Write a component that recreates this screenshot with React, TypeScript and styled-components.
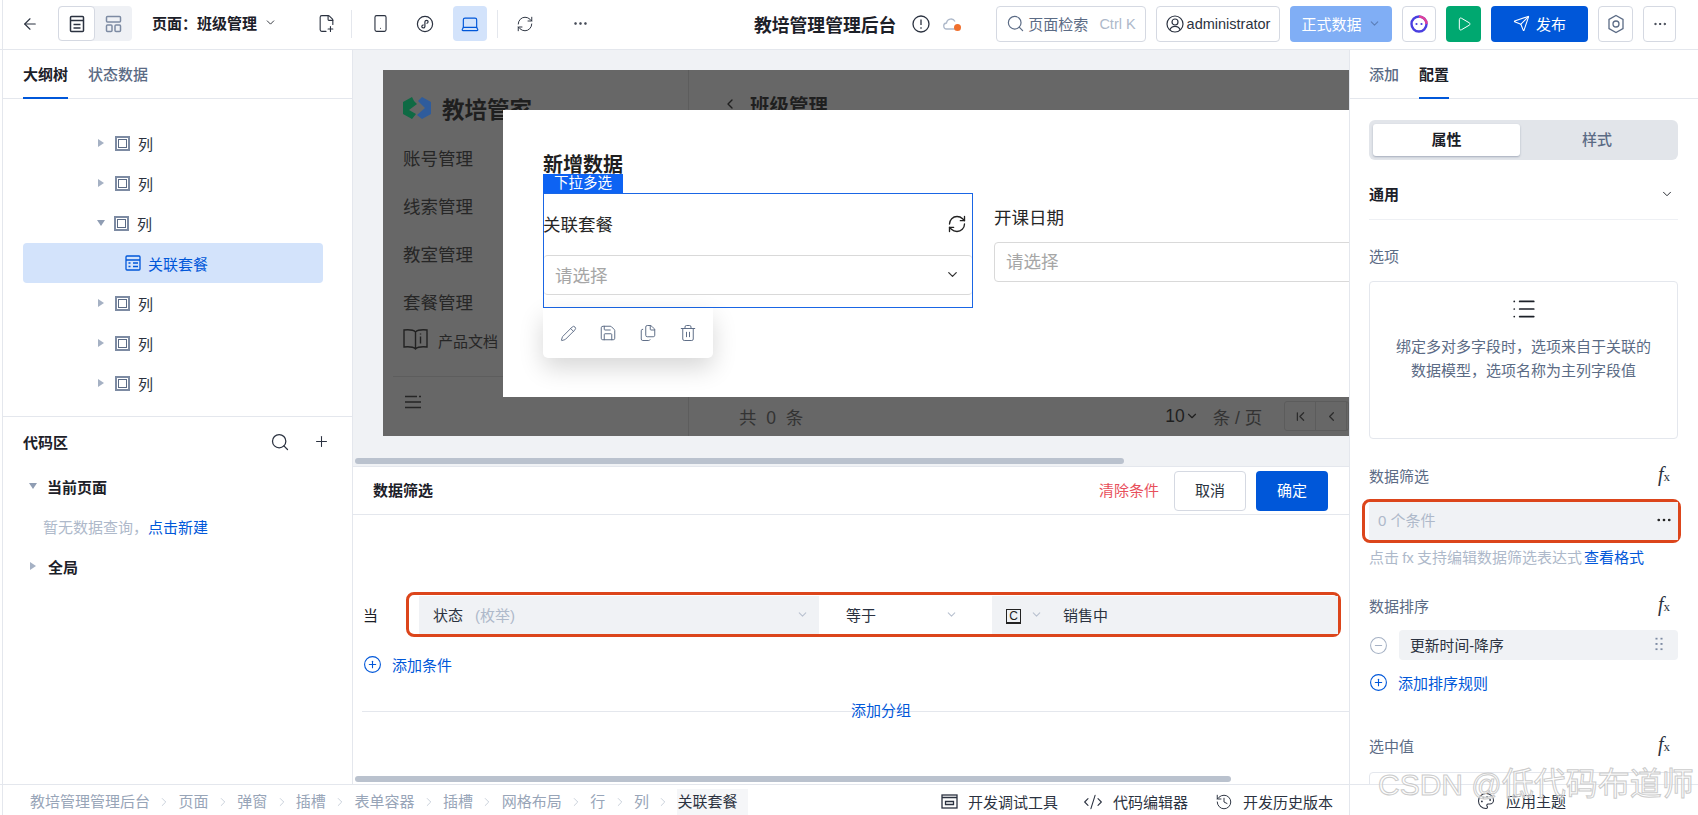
import React from "react";
import styled, { createGlobalStyle } from "styled-components";
import {
  ArrowLeft,
  ChevronDown,
  ChevronFirst,
  ChevronLeft,
  ChevronRight,
  Code2,
  CircleMinus,
  CirclePlus,
  Files,
  FilePlus2,
  History,
  Laptop,
  List,
  MoreHorizontal,
  Palette,
  Pencil,
  Play,
  Plus,
  RefreshCw,
  Save,
  Search,
  Send,
  Smartphone,
  Trash2,
} from "lucide-react";

const BLUE = "#0057d9";
const LINE = "#e4e7ed";
const SLATE = "#5b6b85";
const MUTED = "#aeb9ca";
const RED_MARK = "#dc451b";

const GlobalStyle = createGlobalStyle`
  html, body { margin: 0; padding: 0; background: #fff; }
  body { font-family: "Liberation Sans", "Noto Sans CJK SC", sans-serif; color: #1c2028; }
  * { box-sizing: border-box; }
`;

const Shell = styled.div`
  position: relative;
  width: 1698px;
  height: 815px;
  overflow: hidden;
  display: grid;
  grid-template-rows: 50px 734px 31px;
  background: #fff;
  &::before {
    content: "";
    position: absolute;
    left: 2px;
    top: 0;
    bottom: 0;
    width: 1px;
    background: ${LINE};
  }
`;

/* ---------- top bar ---------- */
const TopBar = styled.header`
  display: flex;
  align-items: center;
  padding: 0 22px 2px 15px;
  border-bottom: 1px solid ${LINE};
`;

const Slot = styled.div<{ $ml?: number; $w?: number; $active?: boolean }>`
  width: ${(p) => p.$w ?? 30}px;
  height: 35px;
  margin-left: ${(p) => p.$ml ?? 0}px;
  display: flex;
  flex: none;
  align-items: center;
  justify-content: center;
  border-radius: 4px;
  color: ${(p) => (p.$active ? BLUE : "#2b3240")};
  background: ${(p) => (p.$active ? "#d3e3fb" : "transparent")};
`;

const ViewToggle = styled.div`
  display: flex;
  width: 74px;
  height: 35px;
  margin-left: 13px;
  flex: none;
  background: #eff1f5;
  border-radius: 4px;
`;

const ViewOption = styled.div<{ $on?: boolean }>`
  width: 37px;
  display: flex;
  align-items: center;
  justify-content: center;
  border-radius: 4px;
  background: ${(p) => (p.$on ? "#fff" : "transparent")};
  border: ${(p) => (p.$on ? `1px solid #d5d9e2` : "none")};
  color: ${(p) => (p.$on ? "#2b3240" : "#7d8ba3")};
`;

const PageSelect = styled.div`
  width: 125px;
  margin-left: 20px;
  padding-bottom: 2px;
  flex: none;
  display: flex;
  align-items: center;
  justify-content: space-between;
  font-size: 15px;
  font-weight: 600;
  white-space: nowrap;
`;

const Sep = styled.i<{ $ml: number }>`
  width: 1px;
  height: 28px;
  margin-left: ${(p) => p.$ml}px;
  flex: none;
  background: ${LINE};
`;

const AppTitle = styled.div`
  margin-left: 159px;
  width: 143px;
  flex: none;
  font-size: 17.8px;
  font-weight: 700;
  white-space: nowrap;
`;

const TopRight = styled.div`
  margin-left: auto;
  display: flex;
  align-items: center;
  gap: 10px;
`;

const Outlined = styled.div<{ $w: number }>`
  width: ${(p) => p.$w}px;
  height: 36px;
  display: flex;
  align-items: center;
  justify-content: center;
  gap: 3px;
  flex: none;
  white-space: nowrap;
  font-size: 14.5px;
  border: 1px solid #d5d9e2;
  border-radius: 4px;
  color: #2b3240;
`;

const SearchHint = styled.span`
  color: ${SLATE};
  font-size: 15px;
`;

const Kbd = styled.span`
  margin-left: 8px;
  color: ${MUTED};
  font-size: 14.5px;
`;

const Filled = styled.div<{ $w: number; $bg: string }>`
  width: ${(p) => p.$w}px;
  height: 36px;
  display: flex;
  align-items: center;
  justify-content: center;
  gap: 6px;
  flex: none;
  color: #fff;
  font-size: 15px;
  border-radius: 4px;
  background: ${(p) => p.$bg};
`;

/* ---------- columns ---------- */
const Columns = styled.div`
  display: grid;
  grid-template-columns: 350px 996px 349px;
  padding-left: 3px;
  min-height: 0;
`;

const LeftPanel = styled.aside`
  display: flex;
  flex-direction: column;
  min-height: 0;
  border-right: 1px solid ${LINE};
`;

const TabBar = styled.div<{ $pl: number }>`
  height: 49px;
  flex: none;
  display: flex;
  gap: 20px;
  padding-left: ${(p) => p.$pl}px;
  border-bottom: 1px solid ${LINE};
`;

const Tab = styled.div<{ $on?: boolean }>`
  height: 49px;
  padding-top: 13px;
  font-size: 15px;
  font-weight: ${(p) => (p.$on ? 600 : 500)};
  color: ${(p) => (p.$on ? "#1c2028" : SLATE)};
  border-bottom: 2px solid ${(p) => (p.$on ? BLUE : "transparent")};
  white-space: nowrap;
`;

const TreeArea = styled.div`
  height: 318px;
  flex: none;
  padding-top: 24px;
  overflow: hidden;
  border-bottom: 1px solid ${LINE};
`;

const TreeRow = styled.div`
  height: 40px;
  display: flex;
  align-items: center;
  padding-left: 95px;
  font-size: 15px;
  color: #2b3240;
`;

const Caret = styled.i<{ $open?: boolean }>`
  flex: none;
  width: 0;
  height: 0;
  ${(p) =>
    p.$open
      ? `border-left: 4px solid transparent; border-right: 4px solid transparent; border-top: 6px solid #8f9db3; margin: 0 -2px 0 -1px;`
      : `border-top: 4px solid transparent; border-bottom: 4px solid transparent; border-left: 6px solid #a5b1c4;`}
`;

const ColumnGlyph = styled.i`
  width: 15px;
  height: 15px;
  margin: 0 8px 0 11px;
  flex: none;
  border: 2px solid #7d8ba3;
  display: flex;
  align-items: center;
  justify-content: center;
  &::after {
    content: "";
    width: 7px;
    height: 7px;
    border: 1px solid #5b6b85;
  }
`;

const SelectedRow = styled.div`
  height: 40px;
  margin: 0 29px 0 20px;
  padding-left: 102px;
  display: flex;
  align-items: center;
  gap: 7px;
  font-size: 15px;
  color: ${BLUE};
  background: #d3e3fb;
  border-radius: 4px;
`;

const CodeArea = styled.div`
  flex: 1;
  padding: 0 20px;
`;

const CodeHeader = styled.div`
  height: 49px;
  display: flex;
  align-items: center;
  font-size: 15px;
  font-weight: 600;
  color: #1c2028;
`;

const CodeTools = styled.div`
  margin-left: auto;
  display: flex;
  align-items: center;
  gap: 23px;
  color: #2b3240;
  padding-right: 2px;
`;

const CodeGroup = styled.div`
  height: 40px;
  display: flex;
  align-items: center;
  padding-left: 7px;
  gap: 12px;
  font-size: 15px;
  font-weight: 600;
`;

const CodeEmpty = styled.div`
  height: 40px;
  display: flex;
  align-items: center;
  padding-left: 20px;
  font-size: 15px;
  color: ${MUTED};
`;

const LinkText = styled.span`
  color: ${BLUE};
`;

/* ---------- canvas ---------- */
const Center = styled.main`
  display: flex;
  flex-direction: column;
  min-width: 0;
  min-height: 0;
`;

const Canvas = styled.div`
  height: 417px;
  flex: none;
  padding: 20px 0 0 30px;
  background: #f0f2f5;
  overflow: hidden;
  border-bottom: 1px solid ${LINE};
`;

const Preview = styled.div`
  position: relative;
  display: flex;
  height: 366px;
  width: 966px;
  background: #676767;
  overflow: hidden;
  color: #1f1f1f;
`;

const PreviewSide = styled.div`
  width: 306px;
  flex: none;
  padding: 26px 0 0 20px;
  border-right: 1px solid #5d5d5d;
`;

const Brand = styled.div`
  height: 24px;
  display: flex;
  align-items: center;
  gap: 11px;
  font-size: 22.5px;
  font-weight: 700;
  white-space: nowrap;
`;

const SideMenu = styled.div`
  margin-top: 13px;
`;

const SideItem = styled.div`
  height: 48px;
  display: flex;
  align-items: center;
  font-size: 17.5px;
  color: #262626;
`;

const DocsRow = styled.div`
  height: 24px;
  margin-top: 3px;
  display: flex;
  align-items: center;
  gap: 10px;
  font-size: 15px;
  color: #262626;
`;

const SideFoot = styled.div`
  height: 61px;
  margin: 24px 0 0 -10px;
  padding: 18px 0 0 11px;
  border-top: 1px solid #5d5d5d;
  color: #262626;
`;

const PreviewMain = styled.div`
  flex: 1;
  display: flex;
  flex-direction: column;
  justify-content: space-between;
  min-width: 0;
`;

const PreviewHead = styled.div`
  height: 24px;
  margin-top: 22px;
  padding-left: 33px;
  display: flex;
  align-items: center;
  gap: 12px;
  font-size: 19.5px;
  font-weight: 700;
`;

const PreviewFoot = styled.div`
  height: 36px;
  display: flex;
  align-items: center;
  padding: 0 0 4px 50px;
  font-size: 17.5px;
  color: #333;
  white-space: nowrap;
`;

const PageSize = styled.span`
  margin-left: 362px;
  display: flex;
  align-items: center;
  color: #1f1f1f;
`;

const PerPage = styled.span`
  margin-left: 14px;
`;

const Pager = styled.div`
  margin-left: 22px;
  width: 65px;
  height: 30px;
  flex: none;
  display: flex;
  border: 1px solid #5c5c5c;
  border-radius: 3px;
`;

const PagerCell = styled.div`
  width: 31px;
  display: flex;
  align-items: center;
  justify-content: center;
  border-right: 1px solid #5c5c5c;
  color: #2c2c2c;
`;

const Modal = styled.div`
  position: absolute;
  left: 120px;
  top: 40px;
  width: 846px;
  height: 287px;
  padding: 46px 0 0 40px;
  background: #fff;
  overflow: hidden;
`;

const ModalTitle = styled.div`
  font-size: 20px;
  font-weight: 700;
  line-height: 18px;
  color: #1f1f1f;
`;

const FormRow = styled.div`
  display: flex;
`;

const Widget = styled.div`
  width: 430px;
  flex: none;
`;

const WidgetTag = styled.div`
  position: relative;
  width: 80px;
  height: 19px;
  text-align: center;
  font-size: 14.5px;
  line-height: 19px;
  color: #fff;
  background: #0d63f3;
`;

const WidgetBox = styled.div`
  height: 115px;
  border: 1px solid #1a66e5;
`;

const WidgetLabel = styled.div`
  height: 61px;
  display: flex;
  align-items: center;
  justify-content: space-between;
  padding: 0 5px 2px 0;
  margin-left: -1px;
  font-size: 17.5px;
  color: #262626;
`;

const FakeSelect = styled.div`
  height: 40px;
  display: flex;
  align-items: center;
  justify-content: space-between;
  padding: 0 12px 2px 11px;
  border-top: 1px solid #d9d9d9;
  border-bottom: 1px solid #d9d9d9;
  border-radius: 4px;
  font-size: 17.5px;
  color: #a6a6a6;
`;

const Toolbar = styled.div`
  width: 170px;
  height: 50px;
  display: flex;
  align-items: center;
  gap: 22px;
  padding-left: 17px;
  color: #5b6b85;
  background: #fff;
  border-radius: 0 0 5px 5px;
  box-shadow: 0 10px 24px rgba(0, 0, 0, 0.16);
`;

const SideField = styled.div`
  margin: 32px 0 0 21px;
  width: 400px;
  flex: none;
`;

const SideFieldLabel = styled.div`
  line-height: 24px;
  font-size: 17.5px;
  color: #262626;
`;

const SideInput = styled.div`
  height: 40px;
  margin-top: 12px;
  padding: 0 0 3px 11px;
  display: flex;
  align-items: center;
  border: 1px solid #d9d9d9;
  border-radius: 4px;
  font-size: 17.5px;
  color: #a6a6a6;
`;

const ThumbBar = styled.div<{ $w: number; $mt: number }>`
  width: ${(p) => p.$w}px;
  height: 6px;
  margin: ${(p) => p.$mt}px 0 0 2px;
  flex: none;
  background: #bac2ce;
  border-radius: 3px;
`;

const CanvasThumb = styled(ThumbBar)`
  margin-left: -28px;
`;

/* ---------- filter panel ---------- */
const FilterPanel = styled.section`
  flex: 1;
  display: flex;
  flex-direction: column;
  min-height: 0;
`;

const FilterHead = styled.div`
  height: 48px;
  flex: none;
  display: flex;
  align-items: center;
  padding: 0 21px 0 20px;
  font-size: 15px;
  font-weight: 600;
  border-bottom: 1px solid ${LINE};
`;

const HeadTitle = styled.span`
  padding-bottom: 3px;
`;

const ClearLink = styled.span`
  margin-left: auto;
  padding-bottom: 3px;
  font-size: 15px;
  font-weight: 400;
  color: #e8505b;
`;

const HeadButton = styled.div<{ $primary?: boolean }>`
  width: 72px;
  height: 40px;
  margin-left: ${(p) => (p.$primary ? 10 : 15)}px;
  padding-bottom: 3px;
  display: flex;
  align-items: center;
  justify-content: center;
  border-radius: 4px;
  font-size: 15px;
  font-weight: 400;
  color: ${(p) => (p.$primary ? "#fff" : "#2b3240")};
  background: ${(p) => (p.$primary ? BLUE : "#fff")};
  border: ${(p) => (p.$primary ? "none" : "1px solid #d5d9e2")};
`;

const ConditionRow = styled.div`
  margin-top: 77px;
  padding-left: 10px;
  display: flex;
  align-items: center;
  font-size: 15px;
`;

const Marked = styled.div`
  margin-left: 28px;
  width: 935px;
  height: 45px;
  padding: 1px 0 0 10px;
  display: flex;
  border: 3px solid ${RED_MARK};
  border-radius: 8px;
`;

const CondField = styled.div<{ $w?: number; $plain?: boolean }>`
  width: ${(p) => (p.$w ? `${p.$w}px` : "auto")};
  flex: ${(p) => (p.$w ? "none" : 1)};
  height: 38px;
  padding-bottom: 2px;
  display: flex;
  align-items: center;
  font-size: 15px;
  background: ${(p) => (p.$plain ? "#fff" : "#f0f2f5")};
  color: #2b3240;
`;

const CondText = styled.span<{ $ml: number; $muted?: boolean }>`
  margin-left: ${(p) => p.$ml}px;
  color: ${(p) => (p.$muted ? MUTED : "#2b3240")};
  white-space: nowrap;
`;

const CondChevron = styled(ChevronDown)<{ $ml?: number; $mr?: number }>`
  margin-left: ${(p) => (p.$ml === undefined ? "auto" : `${p.$ml}px`)};
  margin-right: ${(p) => p.$mr ?? 0}px;
  flex: none;
  color: #b9c2d0;
`;

const ConstBadge = styled.span`
  width: 15px;
  height: 15px;
  margin: 5px 0 0 14px;
  flex: none;
  display: flex;
  align-items: center;
  justify-content: center;
  border: 1px solid #222;
  border-bottom-width: 2px;
  font-size: 12px;
  line-height: 1;
  color: #222;
`;

const AddRow = styled.div<{ $mt: number; $ml?: number }>`
  margin: ${(p) => p.$mt}px 0 0 ${(p) => p.$ml ?? 10}px;
  height: 24px;
  padding-bottom: 3px;
  display: flex;
  align-items: center;
  gap: 10px;
  font-size: 15px;
  color: ${BLUE};
`;

const GroupLine = styled.div`
  margin: 33px 0 0 9px;
  height: 1px;
  flex: none;
  display: flex;
  align-items: center;
  padding-left: 489px;
  background: ${LINE};
  font-size: 15px;
  color: ${BLUE};
`;

const GroupLabel = styled.span`
  margin-bottom: 4px;
`;

const BottomThumb = styled(ThumbBar)`
  margin-top: auto;
  margin-bottom: 2px;
`;

/* ---------- right panel ---------- */
const RightPanel = styled.aside`
  border-left: 1px solid ${LINE};
  overflow: hidden;
`;

const RightBody = styled.div`
  padding: 21px 20px 0 19px;
`;

const Segment = styled.div`
  height: 40px;
  padding: 4px;
  display: flex;
  background: #e2e5ea;
  border-radius: 6px;
`;

const SegmentItem = styled.div<{ $on?: boolean }>`
  flex: ${(p) => (p.$on ? "0 0 147px" : 1)};
  padding-bottom: 3px;
  display: flex;
  align-items: center;
  justify-content: center;
  font-size: 15px;
  font-weight: ${(p) => (p.$on ? 600 : 500)};
  color: ${(p) => (p.$on ? "#1c2028" : SLATE)};
  background: ${(p) => (p.$on ? "#fff" : "transparent")};
  border-radius: 3px;
  box-shadow: ${(p) => (p.$on ? "0 1px 2px rgba(90,105,130,.45)" : "none")};
`;

const Section = styled.div`
  height: 50px;
  margin-top: 10px;
  padding: 0 4px 2px 0;
  display: flex;
  align-items: center;
  justify-content: space-between;
  border-bottom: 1px solid #eef0f4;
  font-size: 15px;
  font-weight: 700;
`;

const FieldLabel = styled.div<{ $mt: number }>`
  height: 24px;
  margin-top: ${(p) => p.$mt}px;
  padding: 0 8px 3px 0;
  display: flex;
  align-items: center;
  justify-content: space-between;
  font-size: 15px;
  color: ${SLATE};
`;

const Fx = styled.span`
  font-family: "Liberation Serif", serif;
  font-style: italic;
  font-size: 20px;
  line-height: 21px;
  color: #2b3240;
  & > small {
    font-size: 13px;
    font-style: normal;
  }
`;

const OptionBox = styled.div`
  height: 158px;
  margin-top: 12px;
  padding-top: 14px;
  display: flex;
  flex-direction: column;
  align-items: center;
  text-align: center;
  border: 1px solid ${LINE};
  border-radius: 4px;
  color: #1c2028;
`;

const OptionText = styled.div`
  margin-top: 13px;
  font-size: 15px;
  line-height: 24px;
  color: ${SLATE};
`;

const FilterCount = styled.div`
  width: 319px;
  height: 44px;
  margin: 10px 0 0 -7px;
  padding: 0 0 0 4px;
  display: flex;
  border: 3px solid ${RED_MARK};
  border-radius: 8px;
`;

const FilterCountInner = styled.div`
  flex: 1;
  display: flex;
  align-items: center;
  justify-content: space-between;
  padding: 0 5px 3px 9px;
  font-size: 15px;
  color: ${MUTED};
  background: #f0f2f5;
`;

const HelpLine = styled.div`
  height: 24px;
  margin-top: 2px;
  padding-bottom: 2px;
  display: flex;
  align-items: center;
  gap: 2px;
  font-size: 15px;
  word-spacing: -1px;
  color: ${MUTED};
  white-space: nowrap;
`;

const SortRow = styled.div`
  height: 30px;
  margin-top: 11px;
  display: flex;
  align-items: center;
  gap: 11px;
  color: #a5b1c4;
`;

const SortField = styled.div`
  flex: 1;
  height: 30px;
  padding: 0 14px 2px 11px;
  display: flex;
  align-items: center;
  justify-content: space-between;
  font-size: 14.8px;
  color: #2b3240;
  background: #f0f2f5;
  border-radius: 4px;
`;

const GripDots = styled.span`
  width: 10px;
  height: 16px;
  background-image: radial-gradient(circle, #7d8ba3 1px, transparent 1.2px);
  background-size: 5px 5.3px;
`;

const ValueInput = styled.div`
  height: 40px;
  margin-top: 13px;
  border: 1px solid ${LINE};
  border-radius: 4px;
`;

/* ---------- bottom bar ---------- */
const BottomBar = styled.footer`
  display: flex;
  padding-left: 3px;
  border-top: 1px solid ${LINE};
`;

const BottomLeft = styled.div`
  width: 1346px;
  flex: none;
  display: flex;
  align-items: center;
  padding: 3px 16px 0 27px;
  font-size: 15px;
  white-space: nowrap;
`;

const Crumb = styled.span<{ $last?: boolean }>`
  color: ${(p) => (p.$last ? "#2b3240" : "#98a5b8")};
  background: ${(p) => (p.$last ? "#f5f6f8" : "transparent")};
  padding-right: ${(p) => (p.$last ? 10 : 0)}px;
  line-height: 26px;
`;

const CrumbSep = styled(ChevronRight)`
  margin: 0 7.3px;
  flex: none;
  color: #b3bdcc;
`;

const DevTools = styled.div`
  margin-left: auto;
  display: flex;
  align-items: center;
  gap: 25px;
`;

const DevTool = styled.span<{ $ml?: number }>`
  margin-left: ${(p) => p.$ml ?? 0}px;
  display: flex;
  align-items: center;
  gap: 10px;
  color: #2b3240;
`;

const BottomRight = styled.div`
  flex: 1;
  display: flex;
  align-items: center;
  gap: 11px;
  padding: 1px 0 0 127px;
  border-left: 1px solid ${LINE};
  font-size: 15px;
  color: #2b3240;
  white-space: nowrap;
`;

const Watermark = styled.div`
  position: absolute;
  left: 1378px;
  top: 764px;
  font-size: 32px;
  line-height: 40px;
  white-space: nowrap;
  color: rgba(255, 255, 255, 0.55);
  -webkit-text-stroke: 1px #cbcbcb;
  pointer-events: none;
`;

const WatermarkLatin = styled.span`
  font-size: 30px;
`;

/* ---------- drawn icons ---------- */
const PageListIcon = () => (
  <svg width="16" height="18" viewBox="0 0 16 18" fill="none" stroke="currentColor" strokeWidth="1.5">
    <rect x="1.5" y="1.5" width="13" height="15" rx="1" />
    <path d="M1.5 5.5h13M4.5 9.5h7M4.500 13h7" />
  </svg>
);

const LayoutIcon = () => (
  <svg width="17" height="18" viewBox="0 0 17 18" fill="none" stroke="currentColor" strokeWidth="1.5">
    <rect x="1.5" y="1.5" width="14" height="5.5" rx="1" />
    <rect x="1.5" y="10" width="5.500" height="6.500" rx="1" />
    <rect x="10" y="10" width="5.500" height="6.500" rx="1" />
  </svg>
);

const MiniProgramIcon = () => (
  <svg width="18" height="18" viewBox="0 0 18 18" fill="none" stroke="currentColor" strokeWidth="1.2">
    <circle cx="9" cy="9" r="7.6" />
    <path d="M5.800 11.600c0 1.800 2.800 1.800 3.100 0V6.800c.2-1.800 3.200-1.800 3.200 0 0 1-.7 1.600-1.600 1.700M7.600 9.800c-.9.100-1.800.7-1.800 1.800" />
  </svg>
);

const AlertIcon = () => (
  <svg width="18" height="18" viewBox="0 0 18 18" fill="none" stroke="#2b3240" strokeWidth="1.3">
    <circle cx="9" cy="9" r="8" />
    <path d="M9 4.500v5.600M9 12.200v1.500" />
  </svg>
);

const CloudIcon = () => (
  <svg width="20" height="16" viewBox="0 0 20 16" fill="none">
    <path d="M12.500 13H4a3 3 0 0 1-.5-6A4.500 4.500 0 0 1 12 5.500" stroke="#aeb9ca" strokeWidth="1.3" />
    <circle cx="14.500" cy="11.500" r="3.500" fill="#f0702e" />
  </svg>
);

const UserIcon = () => (
  <svg width="18" height="18" viewBox="0 0 18 18" fill="none" stroke="#2b3240" strokeWidth="1.2">
    <circle cx="9" cy="9" r="8" />
    <circle cx="9" cy="7" r="3" />
    <path d="M3.800 15c1-2.600 2.800-3.600 5.200-3.600s4.200 1 5.200 3.600" />
  </svg>
);

const RobotIcon = () => (
  <svg width="20" height="20" viewBox="0 0 20 20" fill="none">
    <circle cx="10" cy="10" r="7.500" stroke="#4a3fe0" strokeWidth="2.400" />
    <path d="M10 2.500a7.500 7.500 0 0 1 7.500 7.500" stroke="#e0409a" strokeWidth="2.400" />
    <circle cx="7.500" cy="10" r="1.100" fill="#4a3fe0" />
    <circle cx="12.500" cy="10" r="1.100" fill="#4a3fe0" />
  </svg>
);

const SettingsHexIcon = () => (
  <svg width="18" height="20" viewBox="0 0 18 20" fill="none" stroke="#5b6b85" strokeWidth="1.3">
    <path d="M9 1.500l7 4v9l-7 4-7-4v-9z" />
    <circle cx="9" cy="10" r="3" />
  </svg>
);

const FormItemIcon = () => (
  <svg width="16" height="16" viewBox="0 0 16 16" fill="none" stroke="#0057d9" strokeWidth="1.300">
    <rect x="1" y="1" width="14" height="14" rx="1" />
    <path d="M1 5h14M3.500 8h2M8 8h5M3.500 11.500h2M8 11.500h5" />
  </svg>
);

const LogoIcon = () => (
  <svg width="28" height="22" viewBox="0 0 28 22">
    <path d="M9 0L0 5v12l9 5 4-5-7-4 8-6-3-3z" fill="#0f6a44" />
    <path d="M19 0l9 5v12l-9 5-5-4 8-7-7-7z" fill="#2f5c9c" />
  </svg>
);

const BookIcon = () => (
  <svg width="25" height="24" viewBox="0 0 25 24" fill="none" stroke="#222" strokeWidth="1.400">
    <path d="M12.500 4C10.500 2 6 1.500 1 2v17c5-.5 9.500 0 11.500 2 2-2 6.500-2.500 11.500-2V2c-5-.5-9.500 0-11.500 2zM12.500 4v17" />
    <path d="M17.500 8.500v7M17.500 5.500v1" />
  </svg>
);

const CollapseIcon = () => (
  <svg width="18" height="14" viewBox="0 0 18 14" fill="none" stroke="#262626" strokeWidth="1.500">
    <path d="M1 1.500h12M15 1.500h2M1 7h16M1 12.500h16" />
  </svg>
);

const ConsoleIcon = () => (
  <svg width="17" height="15" viewBox="0 0 17 15" fill="none" stroke="#2b3240" strokeWidth="1.300">
    <rect x="1" y="1" width="15" height="13" />
    <path d="M1 3.500h15M4.500 7.500h8v3h-8z" />
  </svg>
);

const crumbs = ["教培管理管理后台", "页面", "弹窗", "插槽", "表单容器", "插槽", "网格布局", "行", "列"];

const columnRow = (key: number) => (
  <TreeRow key={key}>
    <Caret />
    <ColumnGlyph />列
  </TreeRow>
);

const FxMark = () => (
  <Fx>
    f<small>x</small>
  </Fx>
);

const App: React.FC = () => {
  return (
    <Shell>
      <GlobalStyle />
      <TopBar>
        <Slot>
          <ArrowLeft size={18} strokeWidth={1.5} />
        </Slot>
        <ViewToggle>
          <ViewOption $on>
            <PageListIcon />
          </ViewOption>
          <ViewOption>
            <LayoutIcon />
          </ViewOption>
        </ViewToggle>
        <PageSelect>
          页面：班级管理
          <ChevronDown size={13} strokeWidth={1.6} />
        </PageSelect>
        <Slot $ml={34}>
          <FilePlus2 size={19} strokeWidth={1.4} />
        </Slot>
        <Sep $ml={10} />
        <Slot $ml={13}>
          <Smartphone size={19} strokeWidth={1.4} />
        </Slot>
        <Slot $ml={15}>
          <MiniProgramIcon />
        </Slot>
        <Slot $ml={13} $w={34} $active>
          <Laptop size={20} strokeWidth={1.4} />
        </Slot>
        <Sep $ml={10} />
        <Slot $ml={12}>
          <RefreshCw size={18} strokeWidth={1.3} />
        </Slot>
        <Slot $ml={25}>
          <MoreHorizontal size={17} strokeWidth={1.5} />
        </Slot>
        <AppTitle>教培管理管理后台</AppTitle>
        <Slot $ml={15} $w={18}>
          <AlertIcon />
        </Slot>
        <Slot $ml={13} $w={20}>
          <CloudIcon />
        </Slot>
        <TopRight>
          <Outlined $w={150}>
            <Search size={19} strokeWidth={1.5} color={SLATE} />
            <SearchHint>页面检索</SearchHint>
            <Kbd>Ctrl K</Kbd>
          </Outlined>
          <Outlined $w={124}>
            <UserIcon />
            administrator
          </Outlined>
          <Filled $w={102} $bg="#80aef5">
            正式数据
            <ChevronDown size={13} color="#5b7fb8" />
          </Filled>
          <Outlined $w={34}>
            <RobotIcon />
          </Outlined>
          <Filled $w={35} $bg="#00a870">
            <Play size={16} strokeWidth={1.5} />
          </Filled>
          <Filled $w={97} $bg={BLUE}>
            <Send size={17} strokeWidth={1.5} />
            发布
          </Filled>
          <Outlined $w={35}>
            <SettingsHexIcon />
          </Outlined>
          <Outlined $w={33}>
            <MoreHorizontal size={16} strokeWidth={1.5} />
          </Outlined>
        </TopRight>
      </TopBar>

      <Columns>
        <LeftPanel>
          <TabBar $pl={20}>
            <Tab $on>大纲树</Tab>
            <Tab>状态数据</Tab>
          </TabBar>
          <TreeArea>
            {columnRow(1)}
            {columnRow(2)}
            <TreeRow>
              <Caret $open />
              <ColumnGlyph />列
            </TreeRow>
            <SelectedRow>
              <FormItemIcon />
              关联套餐
            </SelectedRow>
            {columnRow(3)}
            {columnRow(4)}
            {columnRow(5)}
            <TreeRow>
              <Caret />
              <ColumnGlyph />
            </TreeRow>
          </TreeArea>
          <CodeArea>
            <CodeHeader>
              代码区
              <CodeTools>
                <Search size={20} strokeWidth={1.5} />
                <Plus size={17} strokeWidth={1.5} />
              </CodeTools>
            </CodeHeader>
            <CodeGroup>
              <Caret $open />
              当前页面
            </CodeGroup>
            <CodeEmpty>
              暂无数据查询，<LinkText>点击新建</LinkText>
            </CodeEmpty>
            <CodeGroup>
              <Caret />
              全局
            </CodeGroup>
          </CodeArea>
        </LeftPanel>

        <Center>
          <Canvas>
            <Preview>
              <PreviewSide>
                <Brand>
                  <LogoIcon />
                  教培管家
                </Brand>
                <SideMenu>
                  <SideItem>账号管理</SideItem>
                  <SideItem>线索管理</SideItem>
                  <SideItem>教室管理</SideItem>
                  <SideItem>套餐管理</SideItem>
                </SideMenu>
                <DocsRow>
                  <BookIcon />
                  产品文档
                </DocsRow>
                <SideFoot>
                  <CollapseIcon />
                </SideFoot>
              </PreviewSide>
              <PreviewMain>
                <PreviewHead>
                  <ChevronLeft size={16} />
                  班级管理
                </PreviewHead>
                <PreviewFoot>
                  共&nbsp;&nbsp;0&nbsp;&nbsp;条
                  <PageSize>
                    10
                    <ChevronDown size={14} />
                  </PageSize>
                  <PerPage>条 / 页</PerPage>
                  <Pager>
                    <PagerCell>
                      <ChevronFirst size={15} />
                    </PagerCell>
                    <PagerCell>
                      <ChevronLeft size={15} />
                    </PagerCell>
                  </Pager>
                </PreviewFoot>
              </PreviewMain>
              <Modal>
                <ModalTitle>新增数据</ModalTitle>
                <FormRow>
                  <Widget>
                    <WidgetTag>下拉多选</WidgetTag>
                    <WidgetBox>
                      <WidgetLabel>
                        关联套餐
                        <RefreshCw size={20} strokeWidth={1.6} color="#222" />
                      </WidgetLabel>
                      <FakeSelect>
                        请选择
                        <ChevronDown size={15} color="#333" />
                      </FakeSelect>
                    </WidgetBox>
                    <Toolbar>
                      <Pencil size={17} strokeWidth={1.3} />
                      <Save size={18} strokeWidth={1.3} />
                      <Files size={18} strokeWidth={1.3} />
                      <Trash2 size={18} strokeWidth={1.3} />
                    </Toolbar>
                  </Widget>
                  <SideField>
                    <SideFieldLabel>开课日期</SideFieldLabel>
                    <SideInput>请选择</SideInput>
                  </SideField>
                </FormRow>
              </Modal>
            </Preview>
            <CanvasThumb $w={769} $mt={22} />
          </Canvas>

          <FilterPanel>
            <FilterHead>
              <HeadTitle>数据筛选</HeadTitle>
              <ClearLink>清除条件</ClearLink>
              <HeadButton>取消</HeadButton>
              <HeadButton $primary>确定</HeadButton>
            </FilterHead>
            <ConditionRow>
              当
              <Marked>
                <CondField $w={400}>
                  <CondText $ml={14}>状态</CondText>
                  <CondText $ml={12} $muted>
                    (枚举)
                  </CondText>
                  <CondChevron size={13} $mr={10} />
                </CondField>
                <CondField $w={173} $plain>
                  <CondText $ml={27}>等于</CondText>
                  <CondChevron size={13} $ml={69} />
                </CondField>
                <CondField>
                  <ConstBadge>C</ConstBadge>
                  <CondChevron size={13} $ml={9} />
                  <CondText $ml={20}>销售中</CondText>
                </CondField>
              </Marked>
            </ConditionRow>
            <AddRow $mt={17} $ml={10}>
              <CirclePlus size={19} strokeWidth={1.4} />
              添加条件
            </AddRow>
            <GroupLine>
              <GroupLabel>添加分组</GroupLabel>
            </GroupLine>
            <BottomThumb $w={876} $mt={0} />
          </FilterPanel>
        </Center>

        <RightPanel>
          <TabBar $pl={19}>
            <Tab>添加</Tab>
            <Tab $on>配置</Tab>
          </TabBar>
          <RightBody>
            <Segment>
              <SegmentItem $on>属性</SegmentItem>
              <SegmentItem>样式</SegmentItem>
            </Segment>
            <Section>
              通用
              <ChevronDown size={14} strokeWidth={1.6} />
            </Section>
            <FieldLabel $mt={25}>选项</FieldLabel>
            <OptionBox>
              <List size={26} strokeWidth={1.6} />
              <OptionText>
                绑定多对多字段时，选项来自于关联的
                <br />
                数据模型，选项名称为主列字段值
              </OptionText>
            </OptionBox>
            <FieldLabel $mt={26}>
              数据筛选
              <FxMark />
            </FieldLabel>
            <FilterCount>
              <FilterCountInner>
                0 个条件
                <MoreHorizontal size={18} strokeWidth={1.6} color="#222" />
              </FilterCountInner>
            </FilterCount>
            <HelpLine>
              点击 fx 支持编辑数据筛选表达式
              <LinkText>查看格式</LinkText>
            </HelpLine>
            <FieldLabel $mt={26}>
              数据排序
              <FxMark />
            </FieldLabel>
            <SortRow>
              <CircleMinus size={19} strokeWidth={1.3} />
              <SortField>
                更新时间-降序
                <GripDots />
              </SortField>
            </SortRow>
            <AddRow $mt={12} $ml={0}>
              <CirclePlus size={19} strokeWidth={1.4} />
              添加排序规则
            </AddRow>
            <FieldLabel $mt={39}>
              选中值
              <FxMark />
            </FieldLabel>
            <ValueInput />
          </RightBody>
        </RightPanel>
      </Columns>

      <BottomBar>
        <BottomLeft>
          {crumbs.map((c, i) => (
            <React.Fragment key={i}>
              <Crumb>{c}</Crumb>
              <CrumbSep size={14} strokeWidth={1.2} />
            </React.Fragment>
          ))}
          <Crumb $last>关联套餐</Crumb>
          <DevTools>
            <DevTool>
              <ConsoleIcon />
              开发调试工具
            </DevTool>
            <DevTool>
              <Code2 size={20} strokeWidth={1.3} />
              代码编辑器
            </DevTool>
            <DevTool $ml={2}>
              <History size={18} strokeWidth={1.3} />
              开发历史版本
            </DevTool>
          </DevTools>
        </BottomLeft>
        <BottomRight>
          <Palette size={18} strokeWidth={1.4} />
          应用主题
        </BottomRight>
      </BottomBar>
      <Watermark>
        <WatermarkLatin>CSDN @</WatermarkLatin>低代码布道师
      </Watermark>
    </Shell>
  );
};

export default App;
